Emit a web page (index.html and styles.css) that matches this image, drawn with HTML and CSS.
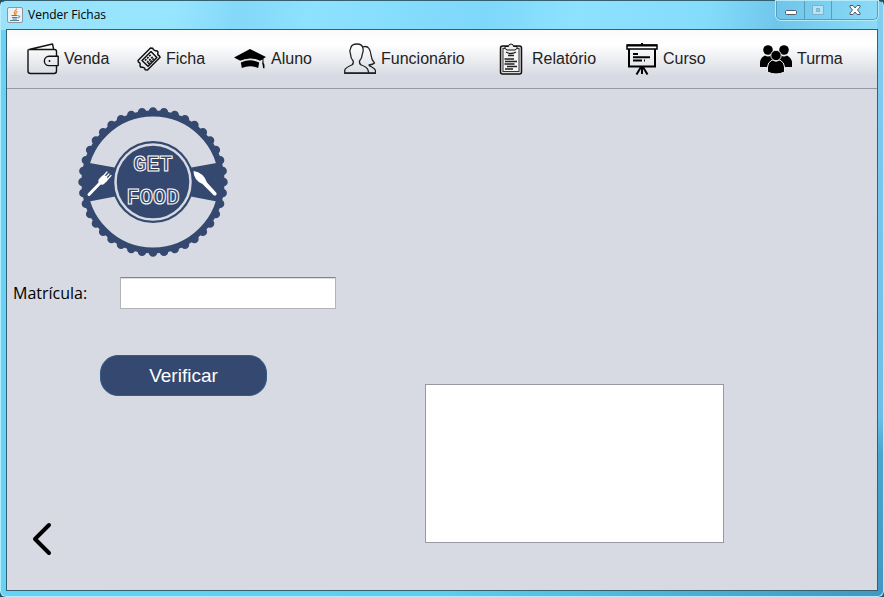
FILE: index.html
```html
<!DOCTYPE html>
<html lang="pt-BR">
<head>
<meta charset="utf-8">
<title>Vender Fichas</title>
<link rel="stylesheet" href="styles.css">
</head>
<body>
<div class="window">
  <header class="titlebar">
    <svg class="app-icon" viewBox="0 0 16 16" aria-hidden="true">
      <rect x=".5" y=".5" width="15" height="15" rx="1.5" fill="#edf1f3" stroke="#8b979d"/>
      <path d="M9.500 1.500C10 3.500 6 4.500 7.500 6.500L8 8M10.500 4.500C8.500 5.200 8.500 6 9 7.500" fill="none" stroke="#e8892b" stroke-width="1.200"/>
      <path d="M4.500 8.500h6M5 10.500h5.500M5.500 12h4.500M3 13.500h9M11 9c2-.8 2.500 1.500 0 2" fill="none" stroke="#557f9f"/>
    </svg>
    <h1 class="title">Vender Fichas</h1>
    <div class="controls">
      <button class="control" type="button" aria-label="Minimizar">
        <svg viewBox="0 0 14 12"><rect x="1.500" y="6.500" width="11" height="4" rx="1" fill="#fff" stroke="#535c66"/></svg>
      </button>
      <button class="control" type="button" aria-label="Maximizar" disabled>
        <svg viewBox="0 0 14 12"><path d="M1.500 1.500h11v9h-11zM5.500 4.500h3v3h-3z" fill="#b9e3f3" fill-rule="evenodd" stroke="#79b2ca"/></svg>
      </button>
      <button class="control control-close" type="button" aria-label="Fechar">
        <svg viewBox="0 0 14 12"><path d="M2 1.500h3L7 4l2-2.500h3v1.500L9.500 6 12 9v1.500H9L7 8l-2 2.500H2V9l2.500-3L2 3z" fill="#fff" stroke="#535c66"/></svg>
      </button>
    </div>
  </header>

  <div class="client">
    <nav class="menu" aria-label="Principal">
      <button class="menu-item" type="button">
        <svg class="icon" viewBox="0 0 32 32" aria-hidden="true"><g fill="none" stroke="#111" stroke-width="1.400" stroke-linejoin="round"><path d="M29.500 13V8.500Q29.500 6.500 27.500 6.500H1.500M3 6.200 25.500 1l1.200 5.300M1 6.500V28Q1 30.500 3.500 30.500H27Q29.500 30.500 29.500 28V22.500"/><path d="M31.200 13.300H22a4.600 4.600 0 0 0 0 9.300h9.200z"/></g><circle cx="22.500" cy="18" r=".9"/></svg>
        Venda
      </button>
      <button class="menu-item" type="button">
        <svg class="icon icon-small" viewBox="0 0 24 24" aria-hidden="true"><g fill="none" stroke="#111" stroke-width="1.500" stroke-linejoin="round"><path d="M1 13.500 13.500 1l2.200.2q.3 2.300 2.600 2.600 2.200-.6 2.700 1.200-.6 2 .1 3 1.700 1 2 2.300L10.500 23l-2.300-.3q-.3-2.200-2.500-2.500-2.200.5-2.700-1.200.5-2-.2-3Q1 15.300 1 13.500z"/><path d="M5 13.500 14 4.500l5.800 6L11 19.300z"/><path d="m8 13.500 6-6M10 15.500l6-6M11.200 17l5.500-5.500" stroke-width="1.600" stroke-dasharray="2 1"/></g></svg>
        Ficha
      </button>
      <button class="menu-item" type="button">
        <svg class="icon" viewBox="0 0 32 32" aria-hidden="true"><path d="M0 14.500 16 6l16 8-2.500 1.500v4.500q1.500 1 .8 5.500l-1.300-.5q0-3-.8-4.500l.5-4-3.500 1.500q-9.200-4-18.400 0z"/><path d="M6.800 19.500q9.200-4.500 18.400 0l-1 5.500q-8.200-3.500-16.400 0z"/><path d="M6 18.500q10-5 20 0" fill="none" stroke="#eee" stroke-width="1.200"/></svg>
        Aluno
      </button>
      <button class="menu-item" type="button">
        <svg class="icon" viewBox="0 0 32 32" aria-hidden="true"><g fill="none" stroke="#222" stroke-width="1.300" stroke-linejoin="round"><path d="M.7 30.300v-3q.5-2.500 7-5.300 2-1 1.500-4Q6.500 15 6.500 11 5 8 6.700 5 7.500 1 13 1q5.500 0 6 4.500.8 3-.7 5.800-.3 4-2.800 6.700-.3 3 1.800 4 6 2 6.800 5.300l.7 3z"/><path d="M18.500 4q4.500-1.500 6.500 1.500 1.500 2.500 2 6.500.5 5 3.500 8-1.500 1.500-5.500 2 .2 1 2.800 2 3.500 1.800 3.700 3.800v2.500h-7"/></g><path d="M.5 30h31" stroke="#222" stroke-width="1.500"/></svg>
        Funcionário
      </button>
      <button class="menu-item" type="button">
        <svg class="icon" viewBox="0 0 32 32" aria-hidden="true"><rect x="5.500" y="3" width="21" height="28" rx="2" fill="#ddd" stroke="#111" stroke-width="1.500"/><rect x="8" y="5.500" width="16" height="23" fill="#f5f5f5" stroke="#333"/><path d="M10 5.500V3.500h3.500q0-2.500 2.500-2.500t2.500 2.500H22v2l-2 1.500h-8z" fill="#eee" stroke="#111"/><g fill="none" stroke="#222" stroke-width="1.300"><path d="M11 9q5 3 10 0M13 12.500h6M9.500 16h9.500M10 18.500h12M9.500 21h10M12 23.500h10M10 26h8"/></g></svg>
        Relatório
      </button>
      <button class="menu-item" type="button">
        <svg class="icon" viewBox="0 0 32 32" aria-hidden="true"><path d="M16 0v3M3 6v17.500h26V6" fill="none" stroke="#000" stroke-width="2"/><rect x="1" y="2" width="30" height="4" fill="#fff" stroke="#000" stroke-width="1.500"/><path d="M1 2.500h30M7 11h5M7 14.300h17M7 17.500h9m2 0h1M15 24l-4.500 7.500M17 24l4.500 7.500M16 24v7" fill="none" stroke="#000" stroke-width="2"/></svg>
        Curso
      </button>
      <button class="menu-item" type="button">
        <svg class="icon" viewBox="0 0 32 32" aria-hidden="true"><circle cx="8" cy="7" r="4.800"/><path d="M0 24v-4q0-5 5-7.500 3 2 6 0 4 2 5 6V24z"/><circle cx="24" cy="7" r="4.800"/><path d="M32 24v-4q0-5-5-7.500-3 2-6 0-4 2-5 6V24z"/><g stroke="#ececef"><path d="M7.500 29v-5q0-4.500 4.500-7 4 2.500 8 0 4.500 2.500 4.500 7v5Q16 33 7.500 29z"/><circle cx="16" cy="12.500" r="5.200"/></g></svg>
        Turma
      </button>
    </nav>

    <main class="content">
      <form class="form">
        <svg class="logo" viewBox="0 0 150 150" role="img" aria-label="Get Food">
          <g fill="none" stroke="#354970">
            <circle cx="75" cy="75" r="68.500" stroke-width="6"/>
            <circle class="scallops" cx="75" cy="75" r="70.500" pathLength="400" stroke-width="8.500"/>
          </g>
          <path d="M6 55 45 62v26L6 95.500zM144 55l-39 7v26l39 7.500z" fill="#354970"/>
          <circle cx="75" cy="75" r="41" fill="#354970"/>
          <circle cx="75" cy="75" r="37.500" fill="none" stroke="#d7dae2" stroke-width="2.500"/>
          <g stroke="#fff" fill="none" stroke-linecap="round"><path d="M11 87.500 25 73" stroke-width="3"/><path d="m24 74 2-2" stroke-width="7"/><path d="m24 70.500 5-5.500M26 72l5-5M28 74l5-5.500" stroke-width="1.200"/></g>
          <path d="M115.500 64q10 1.500 13.500 11.500l9.500 10.500q.5 3-2.500 2.500L124.500 77q-9-4-9-13z" fill="#fff"/>
          <g class="logo-text"><text x="75" y="64">GET</text><text x="75" y="97">FOOD</text></g>
        </svg>

        <div class="field">
          <label for="matricula">Matrícula:</label>
          <input id="matricula" type="text">
        </div>

        <button class="submit" type="button">Verificar</button>

        <button class="back" type="button" aria-label="Voltar">
          <svg viewBox="0 0 20 34"><path d="M17 3 3 17l14 14" fill="none" stroke="#000" stroke-width="4" stroke-linecap="round" stroke-linejoin="round"/></svg>
        </button>
      </form>
      <textarea class="result" aria-label="Resultado"></textarea>
    </main>
  </div>
</div>
</body>
</html>
```
FILE: styles.css
```css
* {
  box-sizing: border-box;
}

body {
  margin: 0;
  background: #24505f;
  font-family: "Liberation Sans", Arial, sans-serif;
}

button {
  padding: 0;
  border: 0;
  background: none;
  font: inherit;
  color: inherit;
}

svg {
  display: block;
}

.window {
  display: flex;
  flex-direction: column;
  min-height: 100vh;
  padding: 0 5px 5px;
  border: 1px solid #b5ecfc;
  border-top-color: #35606f;
  border-radius: 6px;
  background:
    linear-gradient(to bottom, #82cef0 0%, #6bbfe6 70%, #4ba5cc 76%, #4197c1 100%) right / 6px 100% no-repeat,
    linear-gradient(100deg, #9be2fa 0%, #96e5ff 20%, #84d8f8 27%, #8de2ff 35%, #7ed8fa 55%, #8de2ff 65%, #84dcfb 80%, #6fc6ea 88%, #8ddcf8 100%) top / 100% 29px no-repeat,
    linear-gradient(to right, #66d3f6, #5dcdf0 50%, #4197c1);
}

.titlebar {
  display: flex;
  align-items: center;
  gap: 5px;
  height: 28px;
  padding-left: 1px;
}

.app-icon {
  width: 16px;
  height: 16px;
}

.title {
  flex: 1;
  margin: 0;
  font: 12px "Open Sans", "Noto Sans", sans-serif;
  line-height: 16px;
  color: #000;
}

.controls {
  display: flex;
  align-self: flex-start;
  height: 19px;
  border: 1px solid #5b9db8;
  border-top: 0;
  border-radius: 0 0 5px 5px;
  box-shadow: 0 0 0 1px #b5eafa;
}

.control {
  display: grid;
  place-items: center;
  width: 27px;
}

.control + .control {
  border-left: 1px solid #5b9db8;
}

.control-close {
  width: 46px;
}

.control svg {
  width: 14px;
  height: 12px;
}

.client {
  display: flex;
  flex: 1;
  flex-direction: column;
  border: 1px solid #35606f;
  background: #d7dae2;
}

.menu {
  display: grid;
  grid-template-columns: 110fr 97fr 110fr 151fr 131fr 134fr 117fr;
  align-items: center;
  height: 59px;
  padding-left: 20px;
  border-bottom: 1px solid #9699a4;
  background: linear-gradient(#f8faf9, #fff 25%, #d7dae2 80%);
}

.menu-item {
  display: flex;
  align-items: center;
  gap: 5px;
  font-size: 16px;
  line-height: 20px;
  color: #222;
}

.icon {
  flex: none;
  width: 32px;
  height: 32px;
}

.icon-small {
  width: 24px;
  height: 24px;
}

.content {
  display: grid;
  flex: 1;
  grid-template-columns: 418fr 299fr 153fr;
  padding-top: 18px;
}

.form {
  display: flex;
  flex-direction: column;
  align-items: flex-start;
  padding: 0 6px 34px;
}

.logo {
  width: 150px;
  height: 150px;
  margin-left: 65px;
}

.scallops {
  stroke-dasharray: 0 10;
  stroke-linecap: round;
}

.logo-text {
  font: bold 22px "Liberation Mono", monospace;
  text-anchor: middle;
  fill: #354970;
  stroke: #fff;
  stroke-width: 1px;
}

.field {
  display: flex;
  align-items: center;
  margin-top: 20px;
}

.field label {
  width: 107px;
  font: 16px "Open Sans", sans-serif;
  color: #000;
}

.field input {
  width: 216px;
  height: 32px;
  padding: 4px;
  border: 1px solid #b4b4b4;
  border-top-color: #858585;
  background: #fff;
  box-shadow: inset 0 1px #dedede;
  font-size: 16px;
}

.submit {
  width: 167px;
  height: 41px;
  margin: 46px 0 0 87px;
  border: 1px solid #315a87;
  border-radius: 18px;
  background: #354970;
  font-size: 19px;
  color: #fff;
}

.back {
  margin: auto 0 0 19px;
}

.back svg {
  width: 20px;
  height: 34px;
}

.result {
  align-self: end;
  width: 100%;
  height: 159px;
  margin-bottom: 47px;
  padding: 4px;
  border: 1px solid #9699a4;
  background: #fff;
  font-size: 16px;
  resize: none;
}
```
